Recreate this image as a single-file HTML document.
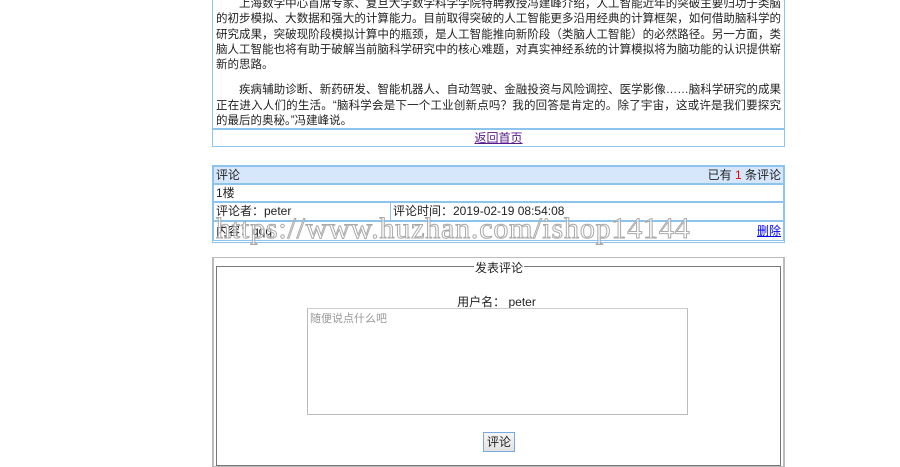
<!DOCTYPE html>
<html><head><meta charset="utf-8"><style>
body{margin:0;width:900px;height:455px;overflow:hidden;background:#fff;font-family:"Liberation Sans","Noto Sans CJK SC",sans-serif;font-size:12px;color:#222;position:relative}
.a{position:absolute}
.box{position:absolute;border:1px solid #8cc4ee;box-sizing:border-box}
p{margin:0;text-indent:23px;line-height:15.3px;font-size:11.5px;text-align:justify}
a{color:#551a8b}
</style></head><body>
<div class="box" style="left:212px;top:-10px;width:573px;height:139px;padding:6px 3px 0 3px">
<p>上海数学中心首席专家、复旦大学数学科学学院特聘教授冯建峰介绍，人工智能近年的突破主要归功于类脑的初步模拟、大数据和强大的计算能力。目前取得突破的人工智能更多沿用经典的计算框架，如何借助脑科学的研究成果，突破现阶段模拟计算中的瓶颈，是人工智能推向新阶段（类脑人工智能）的必然路径。另一方面，类脑人工智能也将有助于破解当前脑科学研究中的核心难题，对真实神经系统的计算模拟将为脑功能的认识提供崭新的思路。</p>
<p style="margin-top:10px">疾病辅助诊断、新药研发、智能机器人、自动驾驶、金融投资与风险调控、医学影像……脑科学研究的成果正在进入人们的生活。“脑科学会是下一个工业创新点吗？我的回答是肯定的。除了宇宙，这或许是我们要探究的最后的奥秘。”冯建峰说。</p>
</div>
<div class="box" style="left:212px;top:129px;width:573px;height:18px;text-align:center;line-height:16px"><a href="#" style="color:#551a8b">返回首页</a></div>

<div class="box" style="left:212px;top:165px;width:573px;height:78px;border-width:1px"></div>
<div class="box" style="left:213px;top:166px;width:571px;height:18px;background:#d6e6fb;line-height:16px;padding:0 2px">评论<span style="float:right">已有 <span style="color:#e00">1</span> 条评论</span></div>
<div class="box" style="left:213px;top:184px;width:571px;height:18px;line-height:16px;padding:0 2px">1楼</div>
<div class="box" style="left:213px;top:202px;width:178px;height:19px;line-height:17px;padding:0 2px">评论者：peter</div>
<div class="box" style="left:390px;top:202px;width:394px;height:19px;line-height:17px;padding:0 2px">评论时间：2019-02-19 08:54:08</div>
<div class="box" style="left:213px;top:221px;width:571px;height:20px;line-height:18px;padding:0 2px">内容：qqq<a href="#" style="float:right;color:#00e">删除</a></div>
<div class="a" style="left:216px;top:212px;font-family:'Liberation Serif',serif;font-size:30px;color:rgba(255,255,255,0.6);-webkit-text-stroke:1px #aaa;letter-spacing:0.8px;white-space:nowrap">https://www.huzhan.com/ishop14144</div>

<div class="a" style="left:212px;top:257px;width:573px;height:210px;border:1px solid #bbb;box-sizing:border-box;border-right-width:2px;border-left-width:2px"></div>
<div class="a" style="left:216px;top:266px;width:565px;height:200px;border:1px solid #777;box-sizing:border-box"></div>
<div class="a" style="left:474px;top:260px;background:#fff;padding:0 1px;font-size:12px;line-height:16px">发表评论</div>
<div class="a" style="left:0;width:993px;top:295px;text-align:center;line-height:15px">用户名： peter</div>
<div class="a" style="left:307px;top:308px;width:381px;height:107px;border:1px solid #bbb;border-top-color:#ccc;box-sizing:border-box;color:#999;font-size:11px;padding:1px 2px">随便说点什么吧</div>
<div class="a" style="left:483px;top:432px;width:32px;height:20px;border:1px solid #7aa8e0;box-sizing:border-box;background:linear-gradient(#f6f6f6,#e2e2e2);text-align:center;line-height:18px">评论</div>
</body></html>
